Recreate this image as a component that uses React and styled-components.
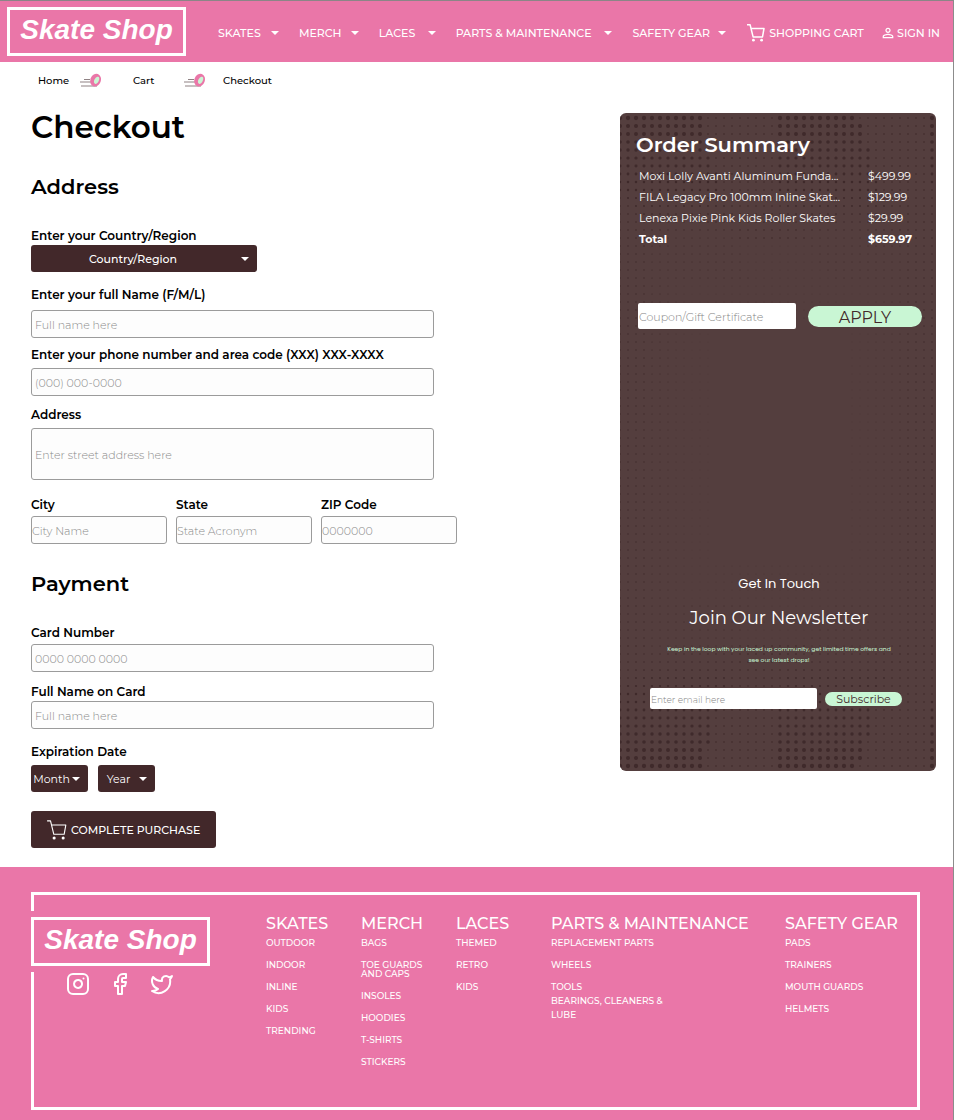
import React from "react";
import styled, { createGlobalStyle } from "styled-components";
import { Instagram, Facebook, Twitter } from "lucide-react";
import { MdPersonOutline } from "react-icons/md";

const pink = "#ea76a8";
const cocoa = "#42282a";
const panel = "#543e3e";
const mint = "#c9f6d4";
const sans = `Montserrat, Inter, "Open Sans", sans-serif`;
const round = `Poppins, Inter, "Open Sans", sans-serif`;

const GlobalStyle = createGlobalStyle`
  *, *::before, *::after { box-sizing: border-box; }
  body { margin: 0; background: #fff; color: #000; font-family: ${sans}; }
  h1, h2, h3, p, ul, ol { margin: 0; padding: 0; }
  ul, ol { list-style: none; }
  a { color: inherit; text-decoration: none; }
  input, textarea, select, button { font-family: inherit; margin: 0; }
  svg { display: block; flex: none; }
`;

const Page = styled.div`
  border-top: 1px solid #8c8587;
  border-right: 1px solid #8c8c8c;
`;

/* ---------- shared drawings ---------- */

const CartIcon = ({ size = 20, stroke = 1.5 }) => (
  <svg width={size} height={size} viewBox="0 0 20 20" fill="none" stroke="currentColor" strokeWidth={stroke} aria-hidden="true">
    <path d="M1 1.7h3.1l3 12.2h9.4l1.5-8.4H5" strokeLinejoin="round" />
    <circle cx="7.4" cy="17.2" r="1.4" fill="currentColor" stroke="none" />
    <circle cx="15.6" cy="17.2" r="1.4" fill="currentColor" stroke="none" />
  </svg>
);

const Caret = () => (
  <svg width="8" height="4" viewBox="0 0 8 4" aria-hidden="true">
    <path d="M0 0h8L4 4z" fill="currentColor" />
  </svg>
);

const WheelIcon = () => (
  <svg width="22" height="16" viewBox="0 0 22 16" aria-hidden="true">
    <path d="M4 6.5h6M0 9h11M1 13h16" stroke="#8f8284" strokeWidth="1.2" />
    <ellipse cx="15.6" cy="7.1" rx="5.2" ry="6.6" fill={pink} transform="rotate(20 15.6 7.1)" />
    <ellipse cx="16.6" cy="7.3" rx="2.2" ry="3.8" fill={mint} transform="rotate(25 16.6 7.3)" />
  </svg>
);

const Logo = styled.a`
  display: flex;
  align-items: center;
  justify-content: center;
  width: 179px;
  height: 49px;
  padding-bottom: 3px;
  border: 3px solid #fff;
  color: #fff;
  font: italic 700 28px/34px "Liberation Sans", Arial, sans-serif;
  white-space: nowrap;
`;

/* ---------- header ---------- */

const Header = styled.header`
  display: flex;
  align-items: center;
  gap: 32px;
  height: 61px;
  padding: 0 9px 0 7px;
  background: ${pink};
  color: #fff;
`;

const Nav = styled.nav`
  flex: 1;
  display: grid;
  grid-template-columns: 81fr 80fr 77fr 177fr 114fr 134fr 64fr;
  align-items: center;
  padding-top: 3px;
  font-size: 11px;
  font-weight: 500;
  line-height: 20px;
  white-space: nowrap;
`;

const NavItem = styled.a`
  display: flex;
  align-items: center;
  justify-content: space-between;
  padding-right: 20px;
`;

const NavAction = styled.a`
  display: flex;
  align-items: center;
  gap: ${(p) => p.$gap}px;
`;

/* ---------- breadcrumb ---------- */

const Breadcrumb = styled.ol`
  display: flex;
  align-items: center;
  height: 38px;
  padding-left: 38px;
  font-size: 10px;
  font-weight: 500;
  line-height: 16px;
`;

const Crumb = styled.li`
  display: flex;
  align-items: center;
  gap: ${(p) => p.$gap || 0}px;
  width: ${(p) => (p.$width ? p.$width + "px" : "auto")};
`;

/* ---------- form ---------- */

const Main = styled.main`
  display: grid;
  grid-template-columns: minmax(0, 1fr) 316px;
  align-items: start;
  column-gap: 24px;
  padding: 5px 17px 19px 31px;
`;

const Title = styled.h1`
  padding-top: 2px;
  font-size: 31px;
  font-weight: 600;
  line-height: 40px;
`;

const SectionTitle = styled.h2`
  margin: ${(p) => p.$top}px 0 ${(p) => p.$bottom}px;
  font-size: 21px;
  font-weight: 600;
  line-height: 32px;
`;

const Field = styled.div`
  display: flex;
  flex-direction: column;
  align-items: flex-start;
  gap: ${(p) => p.$gap || 0}px;
  margin-bottom: ${(p) => p.$after || 0}px;
  max-width: 403px;
`;

const Label = styled.label`
  padding-top: 2px;
  font-size: 12px;
  font-weight: 600;
  line-height: 18px;
`;

const Row = styled.div`
  display: flex;
  gap: ${(p) => p.$gap}px;
`;

const CityRow = styled.div`
  display: grid;
  grid-template-columns: repeat(3, 136px);
  column-gap: 9px;
`;

const Input = styled.input`
  width: 100%;
  height: 28px;
  padding: 1px ${(p) => (p.$tight ? 0 : 3)}px 0;
  border: 1px solid #9b9b9b;
  border-radius: 3px;
  background: #fdfdfd;
  font-size: 11px;
  font-weight: 300;
  &::placeholder { color: #8a8a8a; opacity: 1; }
`;

const TextArea = styled.textarea`
  width: 100%;
  height: 52px;
  padding: 18px 3px 0;
  border: 1px solid #9b9b9b;
  border-radius: 3px;
  background: #fdfdfd;
  font-size: 11px;
  font-weight: 300;
  line-height: 16px;
  resize: none;
  &::placeholder { color: #8a8a8a; opacity: 1; }
`;

const SelectBox = styled.div`
  position: relative;
  width: ${(p) => p.$width}px;
  max-width: 100%;
  color: #fff;
  svg {
    position: absolute;
    top: 12px;
    right: 8px;
    pointer-events: none;
  }
`;

const Select = styled.select`
  appearance: none;
  display: block;
  width: 100%;
  height: 27px;
  padding: 1px ${(p) => (p.$wide ? 22 : 16)}px 0 0;
  border: 0;
  border-radius: 3px;
  background: ${cocoa};
  color: #fff;
  font-size: 11px;
  font-weight: ${(p) => (p.$wide ? 500 : 400)};
  text-align: center;
  text-align-last: center;
`;

const Purchase = styled.button`
  display: flex;
  align-items: center;
  gap: 3px;
  height: 37px;
  margin-top: 19px;
  padding: 0 16px 0 15px;
  border: 0;
  border-radius: 3px;
  background: ${cocoa};
  color: #fff;
  font-size: 11px;
  font-weight: 500;
  white-space: nowrap;
`;

/* ---------- order summary ---------- */

const Summary = styled.aside`
  position: relative;
  margin-top: 8px;
  padding: 16px 14px 62px 16px;
  border-radius: 6px;
  background: ${panel};
  color: #fff;
  overflow: hidden;
`;

const DotLayer = styled.svg`
  position: absolute;
  inset: 0;
`;

const SummaryBody = styled.div`
  position: relative;
`;

const SummaryTitle = styled.h2`
  font-size: 21px;
  font-weight: 600;
  line-height: 32px;
`;

const Lines = styled.table`
  width: 100%;
  margin: 5px 0 0 3px;
  border-collapse: collapse;
  table-layout: fixed;
  font-size: 11px;
  font-weight: 400;
  line-height: 21px;
  th, td { padding: 0; text-align: left; font-weight: inherit; white-space: nowrap; }
  td:last-child { width: 57px; }
`;

const TotalRow = styled.tr`
  font-weight: 700;
`;

const Coupon = styled.form`
  display: flex;
  align-items: center;
  gap: 12px;
  margin: 53px 0 0 2px;
`;

const WhiteInput = styled.input`
  flex: 1;
  min-width: 0;
  height: ${(p) => (p.$small ? 21 : 26)}px;
  padding: 2px 1px 0;
  border: 0;
  border-radius: 2px;
  background: #fff;
  font-size: ${(p) => (p.$small ? 9 : 11)}px;
  font-weight: 300;
  &::placeholder { color: #858585; opacity: 1; }
`;

const Pill = styled.button`
  display: flex;
  align-items: center;
  justify-content: center;
  width: ${(p) => (p.$small ? 77 : 114)}px;
  height: ${(p) => (p.$small ? 14 : 21)}px;
  padding: ${(p) => (p.$small ? 0 : 3)}px 0 0;
  border: 0;
  border-radius: 11px;
  background: ${mint};
  color: ${cocoa};
  font-size: ${(p) => (p.$small ? 11 : 16)}px;
  line-height: 14px;
`;

const Newsletter = styled.section`
  margin-top: 245px;
  text-align: center;
`;

const Eyebrow = styled.p`
  font: 400 13px/20px ${round};
`;

const NewsTitle = styled.h2`
  margin-top: 10px;
  font-size: 18px;
  font-weight: 400;
  line-height: 28px;
`;

const NewsText = styled.p`
  max-width: 232px;
  margin: 12px auto 0;
  color: ${mint};
  font: 400 6px/11px ${round};
`;

const NewsForm = styled.form`
  display: flex;
  align-items: center;
  gap: 8px;
  margin: 22px 20px 0 14px;
`;

/* Halftone dots: heavy wedges fading from the top and bottom edges to the middle. */
const PANEL_W = 316;
const PANEL_H = 658;
const dots = [];
for (let row = 0; row < 82; row++) {
  for (let col = 0; col < 40; col++) {
    const x = col * 8;
    const y = row * 8 + 5;
    const edge = Math.min(y, PANEL_H - y);
    const phase = (x + 2) % 157;
    const heavy = phase > edge * 0.6 - 45 && phase < 82 + edge * 0.3 && edge < 170;
    const side = Math.min(x, PANEL_W - x);
    let r = 0;
    if (heavy) r = 2.2 * Math.max(0.25, 1 - edge / 165);
    else if (edge < 130) r = 0.8;
    else if (side < 90) r = 0.8 * (1 - side / 130);
    else if (edge < 210) r = 0.4;
    if (r > 0.25) dots.push([x, y, r]);
  }
}

const Halftone = () => (
  <DotLayer width={PANEL_W} height={PANEL_H} viewBox={`0 0 ${PANEL_W} ${PANEL_H}`} aria-hidden="true">
    {dots.map(([x, y, r]) => (
      <circle key={`${x}-${y}`} cx={x} cy={y} r={r} fill="#3f2a2b" />
    ))}
  </DotLayer>
);

/* ---------- footer ---------- */

const Footer = styled.footer`
  padding: 25px 33px 11px 31px;
  background: ${pink};
  color: #fff;
`;

const Frame = styled.div`
  display: grid;
  grid-template-columns: 232fr 95fr 95fr 95fr 234fr 132fr;
  align-items: start;
  padding: 19px 0 30px;
  border: 3px solid #fff;
`;

const Brand = styled.div`
  margin: 3px 0 0 -3px;
  ${Logo} { box-shadow: 0 0 0 6px ${pink}; }
`;

const Socials = styled.div`
  display: flex;
  gap: 18px;
  margin: 6px 0 0 35px;
`;

const FooterHead = styled.h3`
  font-size: 16px;
  font-weight: 500;
  line-height: 20px;
  white-space: nowrap;
`;

const FooterItem = styled.li`
  max-width: 120px;
  padding: ${(p) => (p.$dense ? "2px 30px 3px 0" : "0")};
  margin-bottom: ${(p) => (p.$close ? 0 : 8)}px;
  font-size: 9px;
  font-weight: 500;
  line-height: ${(p) => (p.$dense ? 9 : 14)}px;
`;

const FooterList = styled.ul`
  padding-top: 2px;
`;

const navItems = ["SKATES", "MERCH", "LACES", "PARTS & MAINTENANCE", "SAFETY GEAR"];

const orderLines = [
  ["Moxi Lolly Avanti Aluminum Funda...", "$499.99"],
  ["FILA Legacy Pro 100mm Inline Skat...", "$129.99"],
  ["Lenexa Pixie Pink Kids Roller Skates", "$29.99"],
];

const footerColumns = [
  { title: "SKATES", items: ["OUTDOOR", "INDOOR", "INLINE", "KIDS", "TRENDING"] },
  { title: "MERCH", items: ["BAGS", "TOE GUARDS AND CAPS", "INSOLES", "HOODIES", "T-SHIRTS", "STICKERS"] },
  { title: "LACES", items: ["THEMED", "RETRO", "KIDS"] },
  { title: "PARTS & MAINTENANCE", items: ["REPLACEMENT PARTS", "WHEELS", "TOOLS", "BEARINGS, CLEANERS & LUBE"] },
  { title: "SAFETY GEAR", items: ["PADS", "TRAINERS", "MOUTH GUARDS", "HELMETS"] },
];

const TextField = ({ id, label, placeholder, gap, after, tight, type = "text" }) => (
  <Field $gap={gap} $after={after}>
    <Label htmlFor={id}>{label}</Label>
    <Input id={id} type={type} placeholder={placeholder} $tight={tight} />
  </Field>
);

const DropDown = ({ id, text, width, wide, label }) => (
  <SelectBox $width={width}>
    <Select id={id} $wide={wide} aria-label={label} defaultValue="">
      <option value="">{text}</option>
    </Select>
    <Caret />
  </SelectBox>
);

export default function App() {
  return (
    <Page>
      <GlobalStyle />
      <Header>
        <Logo href="#">Skate Shop</Logo>
        <Nav>
          {navItems.map((name) => (
            <NavItem href="#" key={name}>
              {name}
              <Caret />
            </NavItem>
          ))}
          <NavAction href="#" $gap={3}>
            <CartIcon />
            SHOPPING CART
          </NavAction>
          <NavAction href="#" $gap={1}>
            <MdPersonOutline size={16} />
            SIGN IN
          </NavAction>
        </Nav>
      </Header>

      <nav aria-label="Breadcrumb">
        <Breadcrumb>
          <Crumb $gap={11} $width={95}>
            <a href="#">Home</a>
            <WheelIcon />
          </Crumb>
          <Crumb $gap={30} $width={90}>
            <a href="#">Cart</a>
            <WheelIcon />
          </Crumb>
          <Crumb>Checkout</Crumb>
        </Breadcrumb>
      </nav>

      <Main>
        <form>
          <Title>Checkout</Title>
          <SectionTitle $top={24} $bottom={22}>Address</SectionTitle>
          <Field $after={12}>
            <Label htmlFor="country">Enter your Country/Region</Label>
            <DropDown id="country" text="Country/Region" width={226} wide />
          </Field>
          <TextField id="name" label="Enter your full Name (F/M/L)" placeholder="Full name here" gap={6} after={6} />
          <TextField
            id="phone"
            type="tel"
            label="Enter your phone number and area code (XXX) XXX-XXXX"
            placeholder="(000) 000-0000"
            gap={4}
            after={8}
          />
          <Field $gap={4} $after={14}>
            <Label htmlFor="street">Address</Label>
            <TextArea id="street" placeholder="Enter street address here" />
          </Field>
          <CityRow>
            <TextField id="city" label="City" placeholder="City Name" gap={2} tight />
            <TextField id="state" label="State" placeholder="State Acronym" gap={2} tight />
            <TextField id="zip" label="ZIP Code" placeholder="0000000" gap={2} tight />
          </CityRow>

          <SectionTitle $top={24} $bottom={22}>Payment</SectionTitle>
          <TextField id="card" label="Card Number" placeholder="0000 0000 0000" gap={2} after={9} />
          <TextField id="cardname" label="Full Name on Card" placeholder="Full name here" after={12} />
          <Field $gap={4}>
            <Label htmlFor="month">Expiration Date</Label>
            <Row $gap={10}>
              <DropDown id="month" text="Month" width={57} label="Expiration month" />
              <DropDown id="year" text="Year" width={57} label="Expiration year" />
            </Row>
          </Field>
          <Purchase type="button">
            <CartIcon size={22} stroke={1} />
            COMPLETE PURCHASE
          </Purchase>
        </form>

        <Summary>
          <Halftone />
          <SummaryBody>
            <SummaryTitle>Order Summary</SummaryTitle>
            <Lines>
              <colgroup>
                <col />
                <col width="57" />
              </colgroup>
              <tbody>
                {orderLines.map(([name, price]) => (
                  <tr key={name}>
                    <td>{name}</td>
                    <td>{price}</td>
                  </tr>
                ))}
                <TotalRow>
                  <th scope="row">Total</th>
                  <td>$659.97</td>
                </TotalRow>
              </tbody>
            </Lines>
            <Coupon>
              <WhiteInput type="text" aria-label="Coupon or gift certificate" placeholder="Coupon/Gift Certificate" />
              <Pill type="button">APPLY</Pill>
            </Coupon>
            <Newsletter>
              <Eyebrow>Get In Touch</Eyebrow>
              <NewsTitle>Join Our Newsletter</NewsTitle>
              <NewsText>
                Keep in the loop with your laced up community, get limited time offers and see our latest drops!
              </NewsText>
              <NewsForm>
                <WhiteInput $small type="email" aria-label="Email" placeholder="Enter email here" />
                <Pill $small type="button">Subscribe</Pill>
              </NewsForm>
            </Newsletter>
          </SummaryBody>
        </Summary>
      </Main>

      <Footer>
        <Frame>
          <Brand>
            <Logo href="#">Skate Shop</Logo>
            <Socials>
              <a href="#" aria-label="Instagram"><Instagram size={24} /></a>
              <a href="#" aria-label="Facebook"><Facebook size={24} /></a>
              <a href="#" aria-label="Twitter"><Twitter size={24} /></a>
            </Socials>
          </Brand>
          {footerColumns.map(({ title, items }) => (
            <section key={title}>
              <FooterHead>{title}</FooterHead>
              <FooterList>
                {items.map((item) => (
                  <FooterItem key={item} $dense={item.startsWith("TOE")} $close={item === "TOOLS"}>
                    <a href="#">{item}</a>
                  </FooterItem>
                ))}
              </FooterList>
            </section>
          ))}
        </Frame>
      </Footer>
    </Page>
  );
}
